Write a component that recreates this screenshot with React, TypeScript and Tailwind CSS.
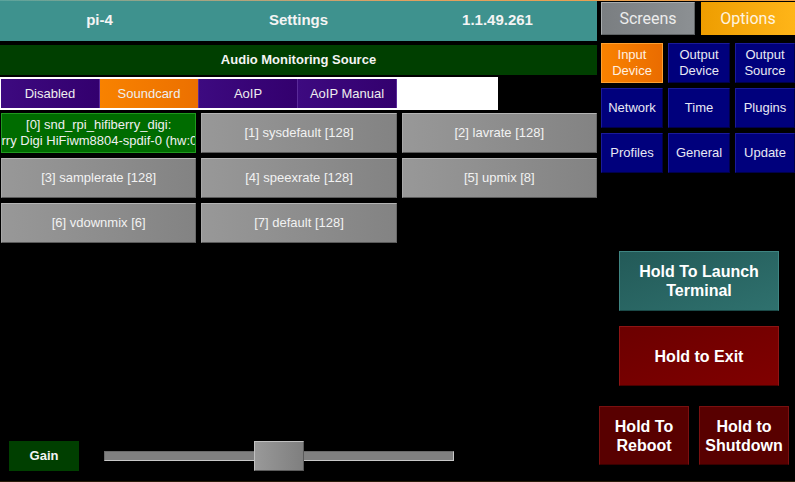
import { type ReactNode } from "react";

const devices = [
  "[1] sysdefault [128]",
  "[2] lavrate [128]",
  "[3] samplerate [128]",
  "[4] speexrate [128]",
  "[5] upmix [8]",
  "[6] vdownmix [6]",
  "[7] default [128]",
];

const tabs = [
  { label: "Disabled", active: false },
  { label: "Soundcard", active: true },
  { label: "AoIP", active: false },
  { label: "AoIP Manual", active: false },
];

const optionButtons = [
  { label: "Input\nDevice", active: true },
  { label: "Output\nDevice", active: false },
  { label: "Output\nSource", active: false },
  { label: "Network", active: false },
  { label: "Time", active: false },
  { label: "Plugins", active: false },
  { label: "Profiles", active: false },
  { label: "General", active: false },
  { label: "Update", active: false },
];

function HoldButton({ children, className }: { children: ReactNode; className: string }) {
  return (
    <button
      type="button"
      className={`flex items-center justify-center whitespace-pre-line text-center text-[16px] font-bold leading-[19px] text-white ${className}`}
    >
      {children}
    </button>
  );
}

export default function App() {
  return (
    <div className="relative flex h-[482px] w-[795px] overflow-hidden bg-black font-['Liberation_Sans',Arial,sans-serif] text-[#f2f2f2]">
      <div className="pointer-events-none absolute inset-x-0 top-0 h-px bg-gradient-to-r from-[#5aa39c] via-[#e0a060] to-[#f0a040]" />
      <div className="pointer-events-none absolute inset-x-0 bottom-0 h-px bg-[#2a1d0c]" />

      {/* left column */}
      <div className="flex w-[597px] flex-col">
        <div className="grid h-[41px] grid-cols-3 items-center bg-[#3e928e] text-center text-[15px] font-bold text-[#f4f4f4]">
          <span>pi-4</span>
          <span>Settings</span>
          <span>1.1.49.261</span>
        </div>

        <div className="mt-[4px] flex h-[30px] items-center justify-center bg-[#003f00] text-[13px] font-bold text-[#f4f4f4]">
          Audio Monitoring Source
        </div>

        <div className="mt-[2px] flex h-[33px] w-[498px] bg-white pl-[1px] pt-[2px]">
          {tabs.map((tab) => (
            <button
              key={tab.label}
              type="button"
              className={`flex h-[29px] w-[99px] items-center justify-center border-r border-[#5a2a9a] text-[13px] text-[#eeeeee] ${
                tab.active
                  ? "bg-gradient-to-r from-[#f88200] to-[#ec7000]"
                  : "bg-gradient-to-r from-[#3d0a80] to-[#33006e]"
              }`}
            >
              {tab.label}
            </button>
          ))}
        </div>

        <div className="mt-[3px] grid grid-cols-3 gap-[5px] pl-[1px]">
          <button
            type="button"
            className="flex h-[40px] flex-col items-center justify-center overflow-hidden border border-[#1f9a1f] bg-[#006c00] text-[13px] leading-[16px] text-[#f0f0f0]"
          >
            <span className="flex w-full justify-center whitespace-nowrap">[0] snd_rpi_hifiberry_digi:</span>
            <span className="flex w-full justify-center whitespace-nowrap">HifiBerry Digi HiFiwm8804-spdif-0 (hw:0,0) [2]</span>
          </button>
          {devices.map((d) => (
            <button
              key={d}
              type="button"
              className="flex h-[40px] items-center justify-center border border-t-[#b4b4b4] border-l-[#a8a8a8] border-r-[#6a6a6a] border-b-[#5a5a5a] bg-gradient-to-r from-[#989898] to-[#838383] text-[13px] text-[#f2f2f2]"
            >
              {d}
            </button>
          ))}
        </div>

        <div className="mb-[11px] mt-auto flex items-center">
          <div className="ml-[9px] flex h-[30px] w-[70px] items-center justify-center bg-[#003f00] text-[13px] font-bold text-[#f4f4f4]">
            Gain
          </div>
          <div className="relative ml-[25px] flex h-[30px] w-[350px] items-center">
            <div className="h-[10px] w-full border border-t-[#6a6a6a] border-l-[#6a6a6a] border-b-[#c8c8c8] border-r-[#c8c8c8] bg-[#808080]" />
            <div className="absolute left-[150px] top-0 h-[30px] w-[50px] border border-t-[#c0c0c0] border-l-[#c0c0c0] border-r-[#5a5a5a] border-b-[#5a5a5a] bg-gradient-to-r from-[#999999] to-[#7f7f7f]" />
          </div>
        </div>
      </div>

      {/* right column */}
      <div className="ml-[2px] flex w-[196px] flex-col">
        <div className="ml-[2px] mt-[2px] flex gap-[6px]">
          <button
            type="button"
            className="flex h-[33px] w-[94px] items-center justify-center border border-t-[#a8acae] border-l-[#a8acae] border-r-[#5f6365] border-b-[#5f6365] bg-gradient-to-r from-[#7a7e81] to-[#8c9093] font-['Roboto',sans-serif] text-[16px] text-[#ececec]"
          >
            Screens
          </button>
          <button
            type="button"
            className="flex h-[33px] w-[94px] items-center justify-center bg-gradient-to-r from-[#ee9d00] to-[#ffb518] font-['Roboto',sans-serif] text-[16px] text-[#fff4e0]"
          >
            Options
          </button>
        </div>

        <div className="ml-[2px] mt-[8px] grid grid-cols-[62px_62px_60px] gap-x-[5px] gap-y-[5px]">
          {optionButtons.map((b) => (
            <button
              key={b.label}
              type="button"
              className={`flex h-[40px] items-center justify-center whitespace-pre-line text-center text-[13px] leading-[16px] ${
                b.active
                  ? "border border-[#ffa030] bg-gradient-to-r from-[#f98200] to-[#ea6c00] text-[#fff0e0]"
                  : "border border-[#1a1a9a] border-b-[#00004a] border-r-[#00004a] bg-[#00007c] text-[#e8e8f4]"
              }`}
            >
              {b.label}
            </button>
          ))}
        </div>

        <HoldButton className="ml-[20px] mt-[78px] h-[60px] w-[160px] border border-[#3f8582] border-b-[#1b4a48] bg-gradient-to-br from-[#235a58] to-[#2f716e]">
          {"Hold To Launch\nTerminal"}
        </HoldButton>

        <HoldButton className="ml-[20px] mt-[15px] h-[60px] w-[160px] border border-[#8e1414] border-b-[#4a0000] bg-gradient-to-br from-[#6c0000] to-[#800000]">
          Hold to Exit
        </HoldButton>

        <div className="mt-[20px] flex gap-[10px]">
          <HoldButton className="h-[59px] w-[90px] border border-[#7a1010] border-b-[#380000] bg-[#580000]">
            {"Hold To\nReboot"}
          </HoldButton>
          <HoldButton className="h-[59px] w-[90px] border border-[#7a1010] border-b-[#380000] bg-[#580000]">
            {"Hold to\nShutdown"}
          </HoldButton>
        </div>
      </div>
    </div>
  );
}
